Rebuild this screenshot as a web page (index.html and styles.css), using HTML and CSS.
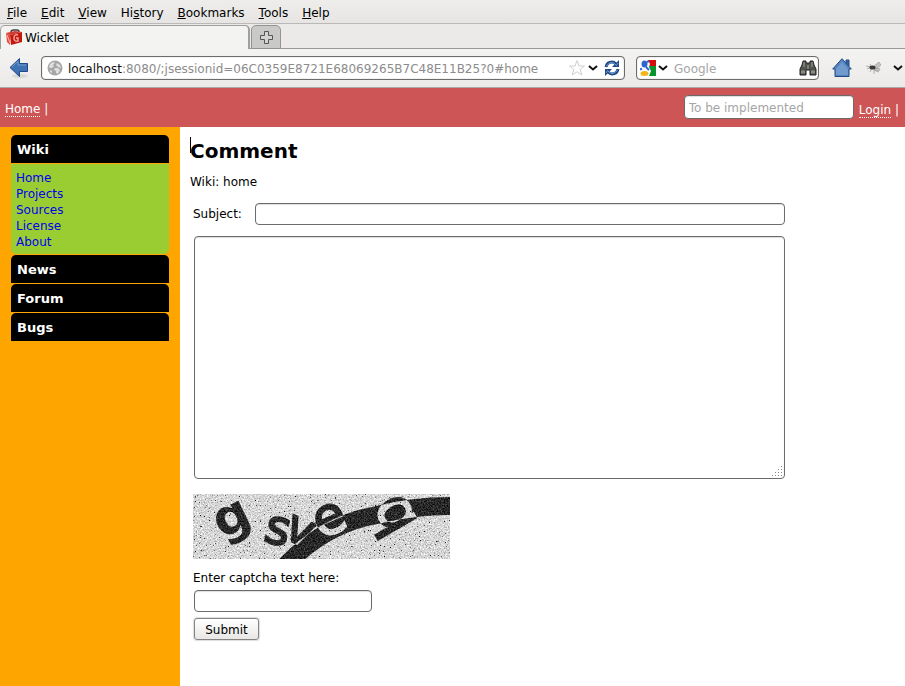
FILE: index.html
```
<!DOCTYPE html>
<html lang="en">
<head>
<meta charset="utf-8">
<title>Wicklet</title>
<link rel="stylesheet" href="styles.css">
</head>
<body>
<div class="browser">
  <nav class="menubar">
    <button><u>F</u>ile</button><button><u>E</u>dit</button><button><u>V</u>iew</button><button>Hi<u>s</u>tory</button><button><u>B</u>ookmarks</button><button><u>T</u>ools</button><button><u>H</u>elp</button>
  </nav>
  <div class="tabs">
    <button class="tab">
      <svg width="17" height="17" viewBox="0 0 17 17"><path d="M5 3q0-2 3-2h3q2 0 2 2" fill="none" stroke="#443c45" stroke-width="1.5"/><path d="M0 4l4 2v10l-3-3z" fill="#e64a3c"/><path d="M0 4l9-2 7 1-12 3z" fill="#cf3a30"/><path d="M4 6l12-3v10L5 16z" fill="#c4180f"/><path d="M1 6l3 8" stroke="#f7b4a9" stroke-width="1"/><path d="M12 6Q8 5 8 9t4 3v-3h-2" fill="none" stroke="#f1a097" stroke-width="1.5"/></svg>
      <span>Wicklet</span>
    </button>
    <button class="newtab" aria-label="New tab"><svg width="13" height="13" viewBox="0 0 13 13"><path d="M4.500.5h4v4h4v4h-4v4h-4v-4h-4v-4h4z" fill="#d4d4d2" stroke="#555"/></svg></button>
  </div>
  <div class="toolbar">
    <button aria-label="Back"><svg width="20" height="22" viewBox="0 0 20 22"><ellipse cx="11" cy="19" rx="8" ry="2" fill="#d9d9d7"/><path d="M1 10.500L10.500 1.500v5h8v8h-8v5z" fill="#3f72b4" stroke="#204a87"/><path d="M3 10l6-6v4h8" fill="none" stroke="#719bcc"/></svg></button>
    <div class="field address">
      <svg width="16" height="16" viewBox="0 0 16 16"><circle cx="8" cy="8" r="7.500" fill="#a6a6a6"/><path d="M3 4l3-2 2 1-2 2 1 1-2 2-2 0-1-1zM10 3l3 2 1 3-3-1-2-2zM8 8l3 0 2 2-2 4-2-1 0-2-2-1zM3 10l2 1v2l-2-1z" fill="#dedede"/></svg>
      <span class="url"><b>localhost</b>:8080/;jsessionid=06C0359E8721E68069265B7C48E11B25?0#home</span>
      <svg width="18" height="18" viewBox="0 0 18 18"><path d="M9 1.500l2 5.500h5.500l-4.300 3.500 1.600 5.500L9 12.800 4.200 16l1.600-5.500L1.500 7H7z" fill="#fff" stroke="#cfcfcf"/></svg>
      <svg width="14" height="10" viewBox="0 0 14 10"><path d="M3 3l4 3.500L11 3" fill="none" stroke="#111" stroke-width="2"/></svg>
      <svg class="reload" width="16" height="16" viewBox="0 0 16 16"><path d="M2 7q1-5 6-5 2 0 4 2M14 9q-1 5-6 5-2 0-4-2" fill="none" stroke="#204a87" stroke-width="3"/><path d="M15 0v7H8zM1 16V9h7z" fill="#204a87"/><path d="M2.500 6q2-3.500 5.500-3.500 2 0 4.500 3L14 3M13.500 10q-2 3.500-5.500 3.500-2 0-4.500-3L2 13" fill="none" stroke="#729fcf"/></svg>
    </div>
    <div class="field search">
      <svg width="16" height="16" viewBox="0 0 16 16"><path d="M8 0h8v6H8z" fill="#d60b0b"/><path d="M9 6h7v10H9z" fill="#0a942f"/><path d="M0 0h8l2 4-1 3 2 4-2 5H0z" fill="#fff"/><ellipse cx="4.500" cy="4" rx="3" ry="3.500" fill="#2f65cf"/><path d="M6 7l3 3" stroke="#2f65cf" stroke-width="2"/><ellipse cx="4.500" cy="13.500" rx="4" ry="2.500" fill="#f4b51b"/><path d="M0 9.500l2-1M9 1l-2 1" stroke="#2f65cf" stroke-width="2"/></svg>
      <svg width="14" height="10" viewBox="0 0 14 10"><path d="M3 3l4 3.500L11 3" fill="none" stroke="#111" stroke-width="2"/></svg>
      <input type="text" placeholder="Google" aria-label="Search the web">
      <svg width="18" height="16" viewBox="0 0 18 16"><path d="M4 1h3v2h4V1h3l1 4 2 4v6h-6v-5H7v5H1V9l2-4z" fill="#50534c" stroke="#222"/><path d="M5 2v5M13 2v5M9 5v4" stroke="#a5a99f"/><path d="M2 12h4M12 12h4" stroke="#888d83" stroke-width="3"/></svg>
    </div>
    <button class="house" aria-label="Home page"><svg width="20" height="20" viewBox="0 0 20 20"><path d="M14 2h3v6h-3z" fill="#3465a4" stroke="#204a87"/><path d="M10 .7L.7 11H3v7.500h14V11h2.300z" fill="#5584bd" stroke="#204a87"/><path d="M4 11l6-7 6 7v6H4z" fill="#719bcc"/></svg></button>
    <button class="bug" aria-label="Debugger"><svg width="16" height="14" viewBox="0 0 16 14"><path d="M0 5l5 1-4 2M4 11l2-4-2-4M8 13V9l5 2" fill="none" stroke="#999" stroke-width=".8"/><path d="M8 5l5-4 2 3-5 4zM8 8l5-1 1 2-4 1z" fill="#c4c4c4" stroke="#888" stroke-width=".5"/><ellipse cx="6.500" cy="6.500" rx="3" ry="2" fill="#3b3b3b"/></svg></button>
    <button aria-label="More"><svg width="14" height="10" viewBox="0 0 14 10"><path d="M3 3l4 3.500L11 3" fill="none" stroke="#111" stroke-width="2"/></svg></button>
  </div>
</div>
<header class="banner">
  <div><a href="#home">Home</a> |</div>
  <div class="account"><input type="text" placeholder="To be implemented" aria-label="Search the wiki"><span><a href="#login">Login</a> |</span></div>
</header>
<div class="page">
  <aside class="sidebar">
    <h2>Wiki</h2>
    <ul><li><a href="#home">Home</a></li><li><a href="#projects">Projects</a></li><li><a href="#sources">Sources</a></li><li><a href="#license">License</a></li><li><a href="#about">About</a></li></ul>
    <h2>News</h2>
    <h2>Forum</h2>
    <h2>Bugs</h2>
  </aside>
  <main>
    <h1>Comment</h1>
    <p>Wiki: home</p>
    <form>
      <div class="subject"><label for="subject">Subject:</label><input id="subject" type="text"></div>
      <div class="editor">
        <textarea aria-label="Comment text"></textarea>
        <svg class="grip" width="12" height="12" viewBox="0 0 12 12"><path d="M10 1h1v1h-1zM7 4h1v1H7zM10 4h1v1h-1zM4 7h1v1H4zM7 7h1v1H7zM10 7h1v1h-1zM1 10h1v1H1zM4 10h1v1H4zM7 10h1v1H7zM10 10h1v1h-1z" fill="#888"/></svg>
      </div>
      <svg class="captcha" width="257" height="65" viewBox="0 0 257 65" role="img" aria-label="Captcha">
        <defs>
          <filter id="grain" x="0" y="0" width="100%" height="100%" color-interpolation-filters="sRGB">
            <feTurbulence type="fractalNoise" baseFrequency=".7" numOctaves="2" seed="7"/>
            <feColorMatrix values="1 0 0 0 0 1 0 0 0 0 1 0 0 0 0 0 0 0 0 1" result="n"/>
            <feComposite in="SourceGraphic" in2="n" operator="arithmetic" k2="1" k3=".6" k4="-.3"/>
          </filter>
          <filter id="specks" x="0" y="0" width="100%" height="100%" color-interpolation-filters="sRGB">
            <feTurbulence type="fractalNoise" baseFrequency=".8" numOctaves="1" seed="21"/>
            <feColorMatrix values="0 0 0 0 .1 0 0 0 0 .1 0 0 0 0 .1 14 0 0 0 -9.500"/>
          </filter>
        </defs>
        <g filter="url(#grain)">
          <rect width="257" height="65" fill="#d6d6d6"/>
          <g class="ink">
            <text x="-17" y="12" font-size="50" transform="translate(39 27) rotate(-26)">g</text>
            <text class="light" x="-12" y="13" font-size="48" transform="translate(84 37) rotate(14)">s</text>
            <text class="light" x="-14" y="13" font-size="46" transform="translate(107 37) rotate(24)">v</text>
            <text class="light" x="-16" y="14" font-size="52" transform="translate(137 26) rotate(-24)">e</text>
            <text class="light" x="-17" y="16" font-size="58" transform="translate(202 19) rotate(60)">q</text>
            <path d="M93 71Q132 30 184 21Q220 12 257 12" fill="none" stroke="#fff" stroke-width="18"/>
          </g>
        </g>
        <rect width="257" height="65" filter="url(#specks)"/>
      </svg>
      <label class="prompt" for="answer">Enter captcha text here:</label>
      <input class="answer" id="answer" type="text">
      <button class="submit" type="button">Submit</button>
    </form>
    <i class="caret"></i>
  </main>
</div>
</body>
</html>
```
FILE: styles.css
```
* { box-sizing: border-box; }
body {
  margin: 0;
  min-height: 100vh;
  display: flex;
  flex-direction: column;
  background: #fff;
  color: #000;
  font: 12px/16px "DejaVu Sans", sans-serif;
}
button, input, textarea { font: inherit; color: inherit; }
button { padding: 0; border: 0; background: none; }
svg { display: block; flex: none; }
input, textarea {
  background: #fff;
  border: 1px solid #6b6b6b;
  border-radius: 4px;
  box-shadow: inset 0 1px 1px #ddd;
}
input { height: 22px; padding: 0 5px; }
input::placeholder { color: #a5a5a5; }

.browser { background: #efeeed; }
.menubar {
  display: flex;
  gap: 14px;
  height: 24px;
  padding: 3px 7px 0;
  background: linear-gradient(#eeedec, #e6e5e3);
  border-bottom: 1px solid #bbb9b7;
}
.tabs {
  display: flex;
  height: 25px;
  padding-top: 1px;
  background: linear-gradient(#ebeae8 96%, #999 96%);
}
.tab {
  display: flex;
  align-items: center;
  gap: 2px;
  width: 250px;
  padding-left: 5px;
  background: #f3f3f2;
  border: 2px solid #a09f9d;
  border-width: 1px 2px 0 1px;
  border-radius: 5px 5px 0 0;
}
.newtab {
  display: grid;
  place-items: center;
  width: 30px;
  margin-left: 1px;
  background: #c9c9c7;
  border: 1px solid #959391;
  border-radius: 5px 5px 0 0;
}
.toolbar {
  display: flex;
  align-items: center;
  height: 39px;
  padding: 0 0 0 9px;
  background: linear-gradient(#f3f3f2, #eceae8);
  border-bottom: 1px solid #aaa;
}
.field {
  display: flex;
  align-items: center;
  height: 24px;
  background: #fff;
  border: 1px solid #6d6c68;
  border-radius: 4px;
  box-shadow: inset 0 0 1px #777;
}
.address { flex: 1; margin: 0 11px 0 12px; padding: 0 4px 0 5px; }
.url { flex: 1; margin-left: 5px; padding-top: 1px; color: #8c8c8c; white-space: nowrap; }
.url b { color: #111; font-weight: normal; }
.reload { margin-left: 4px; }
.search { width: 183px; padding: 0 1px 0 3px; }
.search input { flex: 1; min-width: 0; height: 18px; border: 0; box-shadow: none; padding: 1px 4px 0; }
.house { margin-left: 13px; }
.bug { margin: 0 9px 0 14px; }

.banner {
  display: flex;
  justify-content: space-between;
  height: 39px;
  padding: 7px 6px 0 5px;
  background: #cd5555;
  color: #fff;
}
.banner > div:first-child { padding-top: 6px; }
.banner a { color: #fff; text-decoration: none; border-bottom: 1px dotted #fff; }
.account { display: flex; gap: 5px; }
.account input { width: 170px; height: 24px; padding: 1px 4px 0; color: #000; }
.account span { padding-top: 7px; }

.page { flex: 1; display: flex; }
.sidebar { width: 180px; padding: 8px 11px; background: #ffa500; }
.sidebar h2 {
  margin: 0 0 1px;
  padding: 7px 6px 5px;
  background: #000;
  color: #fff;
  font-size: 13px;
  line-height: 16px;
  border-radius: 5px 5px 0 0;
}
.sidebar ul {
  margin: 0 0 1px;
  padding: 6px 5px 4px;
  list-style: none;
  background: #9acd32;
  border-radius: 0 0 5px 5px;
}
.sidebar a { color: #00e; text-decoration: none; }

main { flex: 1; position: relative; padding: 11px 10px; }
h1 { margin: 0 0 10px; font-size: 20px; line-height: 26px; }
p { margin: 0; }
form { max-width: 595px; padding: 13px 0 0 3px; }
.subject { display: flex; align-items: center; gap: 13px; }
.subject input { flex: 1; }
.editor { position: relative; margin: 11px 0 15px 1px; }
textarea { display: block; width: 100%; height: 243px; resize: none; }
.grip { position: absolute; right: 2px; bottom: 2px; }
.ink > * { mix-blend-mode: difference; }
.ink text { fill: #fff; font-family: "DejaVu Sans", sans-serif; font-weight: bold; }
.ink .light { font-weight: normal; stroke: #fff; stroke-width: 2px; }
.prompt { display: block; margin: 11px 0 4px; }
.answer { display: block; width: 178px; margin-left: 1px; }
.submit {
  width: 65px;
  height: 22px;
  margin: 6px 0 0 1px;
  padding-top: 1px;
  background: linear-gradient(#fff, #e8e7e5);
  border: 1px solid #858483;
  border-radius: 3px;
  box-shadow: 0 0 1px 1px #ddd;
}
.caret { position: absolute; left: 10px; top: 10px; width: 1px; height: 16px; background: #000; }
```
